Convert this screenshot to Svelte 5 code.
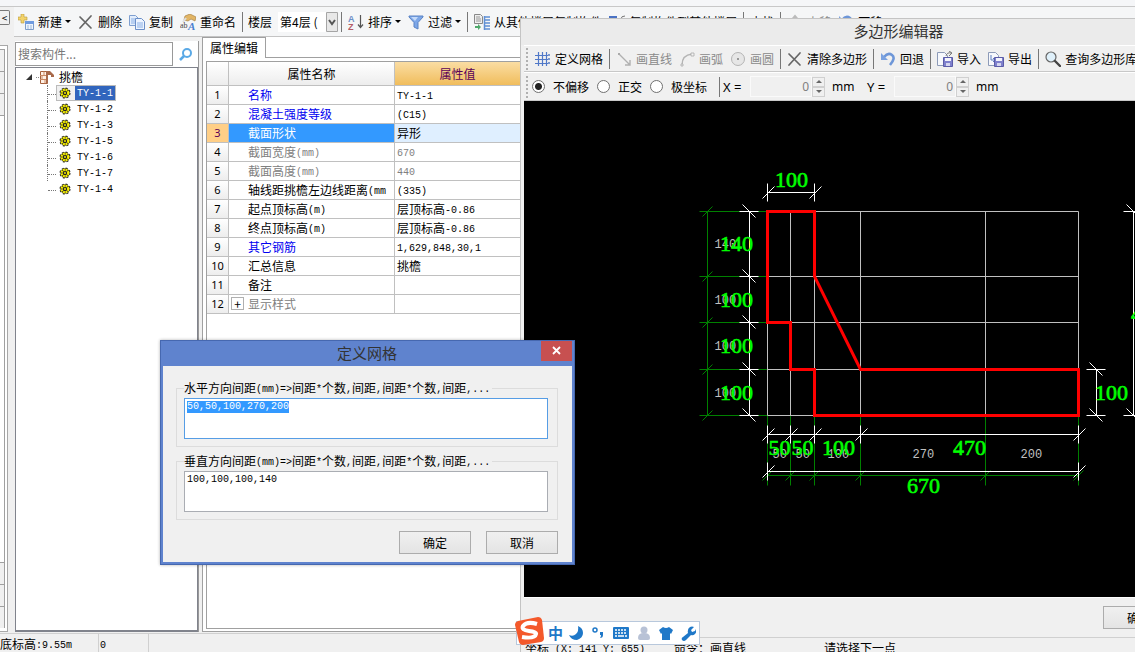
<script lang="ts">
  import { onMount } from "svelte";

  type Tool = { icon?: string; label?: string; caret?: boolean; disabled?: boolean; sep?: boolean };
  type Row = { name: string; value: string; tone?: string; expand?: boolean };

  const SEP: Tool = { sep: true };

  const fileTools: Tool[] = [
    { icon: "new", label: "新建", caret: true },
    { icon: "cross", label: "删除" },
    { icon: "copy", label: "复制" },
    { icon: "rename", label: "重命名" },
    SEP,
  ];

  const listTools: Tool[] = [
    SEP,
    { icon: "sort", label: "排序", caret: true },
    { icon: "filter", label: "过滤", caret: true },
    SEP,
    { icon: "from", label: "从其他楼层复制构件" },
    { icon: "to", label: "复制构件到其他楼层" },
    SEP,
    { label: "查找" },
    SEP,
    { icon: "up", label: "上移", disabled: true },
    { icon: "undo", label: "下移" },
  ];

  const editorTools: Tool[] = [
    { icon: "grid", label: "定义网格" },
    SEP,
    { icon: "line", label: "画直线", disabled: true },
    { icon: "arc", label: "画弧", disabled: true },
    { icon: "circle", label: "画圆", disabled: true },
    SEP,
    { icon: "cross", label: "清除多边形" },
    SEP,
    { icon: "undo", label: "回退" },
    SEP,
    { icon: "import", label: "导入" },
    { icon: "export", label: "导出" },
    SEP,
    { icon: "magnify", label: "查询多边形库" },
  ];

  const members = ["TY-1-1", "TY-1-2", "TY-1-3", "TY-1-5", "TY-1-6", "TY-1-7", "TY-1-4"];
  let selected = $state("TY-1-1");

  const rows: Row[] = [
    { name: "名称", value: "TY-1-1", tone: "key" },
    { name: "混凝土强度等级", value: "(C15)", tone: "key" },
    { name: "截面形状", value: "异形", tone: "active" },
    { name: "截面宽度(mm)", value: "670", tone: "muted" },
    { name: "截面高度(mm)", value: "440", tone: "muted" },
    { name: "轴线距挑檐左边线距离(mm", value: "(335)" },
    { name: "起点顶标高(m)", value: "层顶标高-0.86" },
    { name: "终点顶标高(m)", value: "层顶标高-0.86" },
    { name: "其它钢筋", value: "1,629,848,30,1", tone: "key" },
    { name: "汇总信息", value: "挑檐" },
    { name: "备注", value: "" },
    { name: "显示样式", value: "", tone: "muted", expand: true },
  ];

  const offsets = ["不偏移", "正交", "极坐标"];
  let offset = $state("不偏移");

  // Section grid, in canvas units
  const xs = [243, 266, 290, 336, 461, 554];
  const ys = [110, 175, 221, 268, 314];
  const outline = "243,110 290,110 290,175 336,268 554,268 554,314 290,314 290,268 266,268 266,221 243,221";

  const gridLabels = [
    { x: 190, y: 146, text: "140" },
    { x: 190, y: 202, text: "100" },
    { x: 190, y: 248, text: "100" },
    { x: 190, y: 295, text: "100" },
    { x: 248, y: 356, text: "50" },
    { x: 271, y: 356, text: "50" },
    { x: 303, y: 356, text: "100" },
    { x: 388, y: 356, text: "270" },
    { x: 496, y: 356, text: "200" },
  ];
  const sizeLabels = [
    { x: 267, y: 85, text: "100" },
    { x: 212, y: 149, text: "140" },
    { x: 212, y: 205, text: "100" },
    { x: 212, y: 251, text: "100" },
    { x: 212, y: 298, text: "100" },
    { x: 255, y: 353, text: "50" },
    { x: 278, y: 353, text: "50" },
    { x: 314, y: 353, text: "100" },
    { x: 445, y: 353, text: "470" },
    { x: 399, y: 391, text: "670" },
    { x: 587, y: 298, text: "100" },
    { x: 623, y: 219, text: "440" },
  ];

  let horizontal = $state("50,50,100,270,200");
  let vertical = $state("100,100,100,140");
  let firstField: HTMLTextAreaElement;

  onMount(() => {
    firstField.focus();
    firstField.select();
  });
</script>

<!-- Full-width runs keep the 12px size, half-width runs take exactly half of it per glyph -->
{#snippet song(text: string)}
  {#each text.split(/([ -~]+)/).filter(Boolean) as run}{#if /[ -~]/.test(run)}<span class="half">{run}</span>{:else}{run}{/if}{/each}
{/snippet}

{#snippet icon(kind: string | undefined)}
  <svg class="icon" width="16" height="16" viewBox="0 0 16 16" fill="none" aria-hidden="true">
    {#if kind === "new"}
      <path d="M3 0h3v3h3v3H6v3H3V6H0V3h3z" fill="#f3d36b" stroke="#b99a3c" stroke-width=".6" />
      <path d="M7.500 7.500h8v8h-8z" fill="#eef4fc" stroke="#7d9cc9" />
      <path d="M7 7h9v3H7z" fill="#6f9be0" />
      <path d="M9 12h2m1 0h2m-5 2h2m1 0h2" stroke="#9db8dc" />
    {:else if kind === "cross"}
      <path d="M2 3l11 11M13 2L2 14" stroke="#666" stroke-width="1.700" stroke-linecap="round" />
    {:else if kind === "copy"}
      <path d="M.5 1.500h6l3 3v7h-9z" fill="#e4eefc" stroke="#7f9fd0" />
      <path d="M6.500 4.500h6l3 3v8h-9z" fill="#edf4ff" stroke="#6b8fc8" />
      <path d="M8 9h6m-6 2h6m-6 2h6M2 5h4M2 7h4M2 9h4" stroke="#8bb0e6" />
    {:else if kind === "rename"}
      <path d="M5 2l5-2 6 3-1 4-4-2-3 2-4-1z" fill="#e2b565" stroke="#a98345" stroke-width=".7" />
      <path d="M3 8l3-4" stroke="#ddd" stroke-width="2" />
      <text x="0" y="14" class="glyph-a">ab</text>
      <text x="8" y="16" class="glyph-b">A</text>
    {:else if kind === "sort"}
      <text x="0" y="8" class="glyph-s" fill="#6c8fc7">A</text>
      <text x="0" y="16" class="glyph-s" fill="#b35c66">Z</text>
      <path d="M12.500 1v12M10 10.500l2.500 3 2.500-3" stroke="#555" stroke-width="1.200" />
    {:else if kind === "filter"}
      <path d="M1 2h14v1l-5 5.500V15l-4-2V8.500L1 3z" fill="#7da7e8" stroke="#5b83c4" />
      <path d="M3 3h7L7 7z" fill="#c4dafa" />
    {:else if kind === "from"}
      <path d="M.5.5h6l2 2v7h-8z" fill="#eee" stroke="#888" />
      <path d="M2 3h4M2 5h5M2 7h5" stroke="#999" />
      <path d="M1 12h3v-2l3 3-3 3v-2H1z" fill="#4fa96b" />
      <path d="M10.500 2v14M10 3h6m-6 3h6m-6 3h6m-6 3h6m-6 3h6" stroke="#5f8fd4" stroke-width="1.500" />
    {:else if kind === "to"}
      <path d="M0 2h8v13H0z" fill="#4a72c4" />
      <path d="M2 4h4v9H2z" fill="#cfdffa" />
      <path d="M12 15V5q0-3 4-3" stroke="#777" />
    {:else if kind === "up"}
      <path d="M8 2v12M3 8l5-6 5 6" stroke="#bbb" stroke-width="2" />
    {:else if kind === "grid"}
      <path d="M3.500 1v14M7.500 1v14M11.500 1v14M0 4.500h14M0 8.500h14M0 12.500h14" stroke="#5078c8" stroke-width="1.200" />
      <path d="M13 3h2v2h-2zM13 7h2v2h-2zM13 11h2v2h-2z" fill="#7b98d0" />
    {:else if kind === "line"}
      <path d="M3 3l11 11M14 9v5H9" stroke="#b0b0b0" stroke-width="1.400" />
      <path d="M2 2h2v2H2z" fill="#aaa" />
    {:else if kind === "arc"}
      <path d="M3 14Q3 4 13 3" stroke="#b4b4b4" stroke-width="1.300" />
      <path d="M2 13h2v2H2zM12 2h3v3h-3z" fill="#f4f4f4" stroke="#aaa" stroke-width=".8" />
    {:else if kind === "circle"}
      <circle cx="8" cy="8" r="6.500" fill="#e6e6e6" stroke="#b4b4b4" />
      <path d="M7 7h2v2H7z" fill="#999" />
    {:else if kind === "undo"}
      <path d="M4 6q4-5 8-2t-2 10" stroke="#6d96d8" stroke-width="2.600" />
      <path d="M1 2v7h7z" fill="#7ba2e0" />
    {:else if kind === "import" || kind === "export"}
      <path d="M.5 1.500h7l3 3v10h-10z" fill="#f6f8fc" stroke="#8d9bb8" />
      {#if kind === "import"}
        <path d="M9 5q1-4 5-3M12 0l3 2-3 3" stroke="#777" />
      {:else}
        <path d="M3 4v5h4M5 7l2 2-2 2" stroke="#5f7fc0" />
      {/if}
      <path d="M6.500 6.500h9v9h-9z" fill="#7e80cc" stroke="#5b5ca8" />
      <path d="M8 7h6v3H8z" fill="#f3f3fb" />
      <path d="M9 12h4v3H9z" fill="#d4d5ef" />
    {:else if kind === "magnify"}
      <circle cx="6" cy="6" r="5" fill="#dff0fa" stroke="#666" stroke-width="1.200" />
      <path d="M10 10l5 5" stroke="#444" stroke-width="2.400" stroke-linecap="round" />
    {/if}
  </svg>
{/snippet}

{#snippet tools(items: Tool[])}
  {#each items as tool}
    {#if tool.sep}
      <span class="sep"></span>
    {:else}
      <button class="tool" disabled={tool.disabled}>
        {#if tool.icon}{@render icon(tool.icon)}{/if}
        <span>{tool.label}</span>
        {#if tool.caret}<i class="caret"></i>{/if}
      </button>
    {/if}
  {/each}
{/snippet}

<!-- Slanted end mark of a dimension line -->
{#snippet mark(x: number, y: number, across: boolean)}
  {#if across}
    <path d="M{x - 10} {y}h19M{x - 7} {y - 7}l13 13" />
  {:else}
    <path d="M{x} {y - 9}v18M{x - 5} {y + 6}l12 -12" />
  {/if}
{/snippet}

<div class="desktop">
  <main class="app">
    <div class="ribbon"></div>
    <div class="top">
      <button class="collapse" aria-label="收起">&lt;</button>
      <div class="toolbar main-bar">
        {@render tools(fileTools)}
        <label class="floor-label" for="floor">楼层</label>
        <div class="combo">
          <select id="floor">
            <option>第4层 (</option>
          </select>
          <svg width="12" height="20" viewBox="0 0 12 20" aria-hidden="true">
            <path d="M.5.5h11v19H.5z" fill="#e8e8e8" stroke="#a5a5a5" />
            <path d="M3 8l3 4 3-4" fill="none" stroke="#555" stroke-width="2" />
          </svg>
        </div>
        {@render tools(listTools)}
      </div>
    </div>

    <div class="work">
      <div class="rail">
        <span></span><span></span><span></span><span class="tall"></span><span></span><span></span><span></span>
      </div>

      <section class="tree-pane">
        <div class="search">
          <input type="text" placeholder="搜索构件..." aria-label="搜索构件" />
          <button aria-label="搜索">
            <svg width="14" height="14" viewBox="0 0 14 14" fill="none">
              <circle cx="8" cy="6" r="4" stroke="#5aa9e6" stroke-width="2" />
              <path d="M5 9l-4 4" stroke="#5aa9e6" stroke-width="2.500" />
            </svg>
          </button>
        </div>
        <div class="tree">
          <div class="root">
            <svg width="28" height="14" viewBox="0 0 28 14" aria-hidden="true">
              <path d="M6 4v6H0z" fill="#333" />
              <path d="M10 7.500h4" stroke="#888" stroke-dasharray="1 1" />
              <path d="M14.500 1.500h7v12h-7z" fill="#fff0e4" stroke="#a5603c" />
              <path d="M14 5.500h8m-8 4h8m-4-8v4m-2 0v4m3 0v4" stroke="#c98963" />
              <path d="M20 1h4l4 4v2h-3V5h-3v8h-2z" fill="#a8694a" />
            </svg>
            <span>挑檐</span>
          </div>
          <ul>
            {#each members as name}
              <li>
                <button class="node" class:on={name === selected} onclick={() => (selected = name)}>
                  <svg width="12" height="12" viewBox="0 0 12 12" aria-hidden="true">
                    <circle cx="6" cy="6" r="4.700" fill="#222" stroke="#222" stroke-width="1.600" stroke-dasharray="2 1.700" />
                    <circle cx="6" cy="6" r="3.300" fill="none" stroke="#f5ee00" stroke-width="2.400" stroke-dasharray="2 .6" />
                    <circle cx="6" cy="6" r="1" fill="#f5ee00" />
                  </svg>
                  <span>{@render song(name)}</span>
                </button>
              </li>
            {/each}
          </ul>
        </div>
      </section>

      <section class="props">
        <div class="tabs"><button class="tab">属性编辑</button></div>
        <div class="sheet">
          <table>
            <colgroup><col class="c-no" /><col class="c-name" /><col class="c-value" /></colgroup>
            <thead>
              <tr><th></th><th>属性名称</th><th class="hot">属性值</th></tr>
            </thead>
            <tbody>
              {#each rows as row, i}
                <tr class={row.tone}>
                  <th scope="row">{i + 1}</th>
                  <td class="name">
                    {#if row.expand}<button class="plus" aria-label="展开">+</button>{/if}{@render song(row.name)}
                  </td>
                  <td class="value">{@render song(row.value)}</td>
                </tr>
              {/each}
            </tbody>
          </table>
        </div>
      </section>
    </div>

    <footer class="status">
      <span>{@render song("底标高:9.55m")}</span>
      <span>{@render song("0")}</span>
    </footer>
  </main>

  <section class="editor">
    <h2>多边形编辑器</h2>
    <div class="toolbar edit-bar">
      <span class="grip"></span>
      {@render tools(editorTools)}
    </div>
    <div class="options">
      <span class="grip"></span>
      {#each offsets as name}
        <label class="radio"><input type="radio" name="offset" value={name} bind:group={offset} />{name}</label>
      {/each}
      <span class="sep"></span>
      {#each ["X", "Y"] as axis}
        <label class="axis" for="axis-{axis}">{axis} =</label>
        <input class="number" id="axis-{axis}" type="text" value="0" disabled />
        <span class="spin">
          <button aria-label="{axis} 增加"><i class="up"></i></button>
          <button aria-label="{axis} 减少"><i class="down"></i></button>
        </span>
        <span class="unit">mm</span>
      {/each}
    </div>

    <svg class="canvas" width="100%" role="img" aria-label="挑檐截面">
      <g transform="translate(0.5 0.5)" fill="none">
        <g stroke="#008000">
          <path d="M183 110V314M243 374H554" />
          {#each ys as y}<path d="M175 {y}H243M178 {y + 5}l10 -10" />{/each}
          {#each xs as x}<path d="M{x} 314V384M{x - 5} 379l10 -10" />{/each}
        </g>
        <g stroke="#c0c0c0">
          {#each xs as x}<path d="M{x} 110V314" />{/each}
          {#each ys as y}<path d="M243 {y}H554" />{/each}
        </g>
        <g class="grid-text">
          {#each gridLabels as l}<text x={l.x} y={l.y}>{l.text}</text>{/each}
        </g>
        <g stroke="#fff">
          <path d="M243 91H290M225 110V314M243 333H554M243 370H554M572 268V314M609 110V314" />
          {@render mark(243, 91, false)}
          {@render mark(290, 91, false)}
          {#each ys as y}{@render mark(225, y, true)}{/each}
          {#each xs.filter((x) => x !== 461) as x}{@render mark(x, 333, false)}{/each}
          {@render mark(243, 370, false)}
          {@render mark(554, 370, false)}
          {@render mark(572, 268, true)}
          {@render mark(572, 314, true)}
          {@render mark(609, 110, true)}
          {@render mark(609, 314, true)}
        </g>
        <polygon points={outline} stroke="#f00" stroke-width="3" />
        <g class="size-text">
          {#each sizeLabels as l}<text x={l.x} y={l.y}>{l.text}</text>{/each}
        </g>
      </g>
    </svg>

    <div class="editor-foot">
      <button class="push">确定</button>
      <button class="push">取消</button>
    </div>
    <div class="editor-status">
      <span>{@render song("坐标 (X: 141 Y: 655)")}</span>
      <span>命令：画直线</span>
      <span>请选择下一点</span>
    </div>
  </section>

  <div class="dialog" role="dialog" aria-labelledby="dialog-title">
    <header>
      <h2 id="dialog-title">定义网格</h2>
      <button class="close" aria-label="关闭">
        <svg width="10" height="10" viewBox="0 0 10 10"><path d="M1 1l7 7M8 1L1 8" stroke="#fff" stroke-width="1.800" /></svg>
      </button>
    </header>
    <div class="dialog-body">
      <div class="group">
        <label for="horizontal">{@render song("水平方向间距(mm)=>间距*个数,间距,间距*个数,间距,...")}</label>
        <textarea id="horizontal" spellcheck="false" bind:this={firstField} bind:value={horizontal}></textarea>
      </div>
      <div class="group">
        <label for="vertical">{@render song("垂直方向间距(mm)=>间距*个数,间距,间距*个数,间距,...")}</label>
        <textarea id="vertical" spellcheck="false" bind:value={vertical}></textarea>
      </div>
      <div class="actions">
        <button class="push">确定</button>
        <button class="push">取消</button>
      </div>
    </div>
  </div>

  <div class="ime">
    <svg class="ime-logo" width="30" height="28" viewBox="0 0 30 28" aria-hidden="true">
      <path d="M3 4L23 0q3 0 4 3l2 18q0 3-3 4L8 28q-3 0-4-3L0 8q0-3 3-4z" fill="#f4592b" />
      <path d="M22 7Q12 4 8 9q-2 4 6 5t7 3q-1 5-14 3" fill="none" stroke="#fff" stroke-width="4" />
    </svg>
    <b>中</b>
    <svg width="14" height="14" viewBox="0 0 14 14"><path d="M9 0q5 2 5 7t-6 7q-6 0-8-5 4 2 7-1t2-8z" fill="#1f78c8" /></svg>
    <svg width="14" height="14" viewBox="0 0 14 14">
      <circle cx="4" cy="4" r="2" fill="none" stroke="#1f78c8" stroke-width="1.500" />
      <path d="M9 6h3v3q0 3-3 3 1-1 1-3H9z" fill="#1f78c8" />
    </svg>
    <svg width="16" height="12" viewBox="0 0 16 12">
      <rect width="16" height="12" rx="1" fill="#1f78c8" />
      <path d="M2 3h12M2 6h12" stroke="#fff" stroke-width="1.500" stroke-dasharray="2 1" />
      <path d="M2 9h2m1 0h6m1 0h2" stroke="#fff" stroke-width="1.500" />
    </svg>
    <svg width="14" height="14" viewBox="0 0 14 14">
      <circle cx="7" cy="4" r="3.500" fill="#b8c2d6" />
      <path d="M1 12q0-5 6-5t6 5q0 2-2 2H3q-2 0-2-2z" fill="#b8c2d6" />
    </svg>
    <svg width="14" height="13" viewBox="0 0 14 13"><path d="M4 0q3 2 6 0l4 3-2 4-1-1v7H3V6L2 7 0 3z" fill="#1f78c8" /></svg>
    <svg width="15" height="15" viewBox="0 0 15 15">
      <path d="M1 14q-1-2 1-3l5-4q-1-4 2-6 2-1 4 0l-3 3 1 2 3-1 1-2q1 3-1 5t-4 1l-5 5q-2 2-4 0z" fill="#1f78c8" />
    </svg>
  </div>
</div>

<style>
  :global(body) {
    margin: 0;
  }

  .desktop {
    position: relative;
    height: 100vh;
    overflow: hidden;
    background: #f0f0f0;
    color: #000;
    font: 12px/16px "Noto Sans CJK SC", sans-serif;
  }

  .desktop * {
    box-sizing: border-box;
  }

  button,
  input,
  select,
  textarea {
    margin: 0;
    padding: 0;
    border: 0;
    border-radius: 0;
    outline: 0;
    background: none;
    color: inherit;
    font: inherit;
  }

  svg {
    flex: none;
    display: block;
  }

  .half {
    font: 10px/12px "Liberation Mono", monospace;
    vertical-align: 1px;
    white-space: pre;
  }

  .app {
    height: 100%;
    display: flex;
    flex-direction: column;
  }

  .ribbon {
    height: 7px;
    background: #f5f6f8;
    border-bottom: 1px solid #c8c8c8;
  }

  .top {
    display: flex;
    height: 30px;
    overflow: hidden;
  }

  .collapse {
    width: 10px;
    height: 15px;
    margin: 3px 4px 0 0;
    border: 1px solid #777;
    border-left: 0;
    border-radius: 0 2px 2px 0;
    font-size: 10px;
    line-height: 12px;
  }

  /* ── Toolbars ── */
  .toolbar {
    display: flex;
    align-items: center;
    gap: 1px;
    white-space: nowrap;
  }

  .main-bar {
    flex: 1;
    min-width: 0;
    padding-left: 1px;
    background: #f5f6f7;
    border-bottom: 1px solid #c4c4c4;
  }

  .tool {
    flex: none;
    display: flex;
    align-items: center;
    gap: 4px;
    padding: 0 3px;
  }

  .tool:disabled {
    color: #8a8a8a;
  }

  .caret {
    margin-left: -1px;
    border: 3px solid transparent;
    border-top-color: #000;
    border-bottom: 0;
  }

  .sep {
    flex: none;
    width: 1px;
    height: 20px;
    margin: 0 2px;
    background: #777;
  }

  .glyph-a {
    font: 8px "Liberation Serif", serif;
    fill: #444;
  }

  .glyph-b {
    font: italic bold 11px "Liberation Serif", serif;
    fill: #4a7fd0;
  }

  .glyph-s {
    font: bold 9px "Liberation Sans", sans-serif;
  }

  .floor-label {
    padding: 0 5px 0 2px;
  }

  .combo {
    flex: none;
    display: flex;
    width: 60px;
    background: #fff;
  }

  .combo select {
    width: 48px;
    padding-left: 2px;
    appearance: none;
  }

  /* ── Work area ── */
  .work {
    flex: 1;
    min-height: 0;
    display: flex;
  }

  .rail {
    width: 8px;
    margin: 8px 7px 1px 0;
    padding: 3px 2px 3px 0;
    display: flex;
    flex-direction: column;
    background: #fff;
    border: 1px solid #a8a8a8;
    border-left: 0;
  }

  .rail span {
    height: 22px;
    background: #f0f0f0;
    border: 1px solid #a0a0a0;
    border-left: 0;
    border-bottom: 0;
  }

  .rail .tall {
    flex: 1;
    background: #fff;
  }

  .tree-pane {
    width: 184px;
    margin: 4px 3px 1px 0;
    display: flex;
    flex-direction: column;
    background: #fff;
    border-right: 1px solid #999;
  }

  .search {
    display: flex;
    height: 26px;
    padding: 1px 0;
  }

  .search input {
    width: 158px;
    padding: 0 2px;
    border: 1px solid #999;
    color: #777;
  }

  .search input::placeholder {
    color: #777;
  }

  .search button {
    flex: 1;
    display: grid;
    place-items: center;
  }

  .tree {
    flex: 1;
    padding: 1px 0 0 10px;
    border: 1px solid #80838c;
    border-width: 1px 1px 2px;
  }

  .root {
    display: flex;
    align-items: center;
    gap: 5px;
    height: 16px;
  }

  .tree ul {
    margin: 0 0 0 21px;
    padding: 0;
    list-style: none;
  }

  .tree li {
    display: flex;
    height: 16px;
    border-left: 1px dotted #777;
  }

  .tree li::before {
    content: "";
    width: 8px;
    height: 9px;
    border-bottom: 1px dotted #777;
  }

  .tree li:last-child {
    border-left-color: transparent;
  }

  .node {
    display: flex;
    align-items: center;
    gap: 4px;
    padding: 0 0 0 2px;
    border: 1px solid transparent;
  }

  .node span {
    height: 14px;
    line-height: 12px;
  }

  .node > span {
    padding: 0 2px;
  }

  .node.on {
    background: #f0f0f0;
    border-color: #bbb;
  }

  .node.on span {
    background: #3165bd;
    color: #fff;
  }

  /* ── Property sheet ── */
  .props {
    flex: 1;
    min-width: 0;
    display: flex;
    flex-direction: column;
    margin-bottom: 1px;
    background: #fff;
    border: 1px solid #a0a0a0;
    border-top: 0;
  }

  .tabs {
    display: flex;
    height: 21px;
  }

  .tabs::after {
    content: "";
    flex: 1;
    border-bottom: 1px solid #a0a0a0;
  }

  .tab {
    width: 63px;
    border: 1px solid #a0a0a0;
    border-width: 1px 1px 0 0;
  }

  .sheet {
    flex: 1;
    margin: 3px 0 2px 3px;
    border: 1px solid #a0a0a0;
  }

  table {
    width: 314px;
    table-layout: fixed;
    border-collapse: separate;
    border-spacing: 0;
  }

  .c-no {
    width: 22px;
  }

  .c-name {
    width: 166px;
  }

  th,
  td {
    height: 19px;
    padding: 0;
    border: 1px solid #c0c0c0;
    border-width: 0 1px 1px 0;
    line-height: 16px;
    text-align: left;
    white-space: nowrap;
    overflow: hidden;
  }

  th {
    background: linear-gradient(#fff, #ededed);
    font-weight: 400;
    text-align: center;
  }

  thead th {
    height: 24px;
  }

  tbody th {
    font: 11px/16px "Noto Sans", sans-serif;
  }

  thead .hot {
    background: linear-gradient(#fbdda3, #f0bd5c);
    color: #5a0058;
  }

  .name {
    position: relative;
    padding-left: 19px;
  }

  .value {
    padding-left: 2px;
  }

  .key .name {
    color: #0000f0;
  }

  .muted td {
    color: #808080;
  }

  .active th {
    background: #ffcf87;
    color: #5a0058;
  }

  .active .name {
    background: #3399ff;
    color: #fff;
  }

  .active .value {
    background: #dfefff;
  }

  .plus {
    position: absolute;
    left: 2px;
    top: 2px;
    width: 13px;
    height: 13px;
    border: 1px solid #b0b0b0;
    color: #000;
    line-height: 10px;
  }

  .status {
    display: flex;
    height: 19px;
    border-top: 1px solid #d0d0d0;
    line-height: 20px;
  }

  .status span {
    white-space: nowrap;
  }

  .status > span {
    width: 50px;
    padding-left: 1px;
    border-right: 1px solid #d0d0d0;
  }

  .status > span:first-child {
    width: 99px;
    padding-left: 0;
  }

  /* ── Polygon editor window ── */
  .editor {
    position: absolute;
    left: 520px;
    right: -142px;
    top: 18px;
    bottom: -8px;
    display: flex;
    flex-direction: column;
    padding-left: 3px;
    background: #f0f0f0;
    border: 1px solid #c4c4c4;
    border-bottom: 0;
  }

  h2 {
    margin: 0;
    color: #333;
    font-size: 15px;
    font-weight: 400;
    line-height: 26px;
    text-align: center;
  }

  .editor h2 {
    height: 26px;
    margin-left: -3px;
    background: #ebebeb;
    line-height: 24px;
  }

  .edit-bar,
  .options {
    height: 27px;
    padding-left: 2px;
    border-top: 1px solid #fff;
    border-bottom: 1px solid #c8c8c8;
  }

  .grip {
    flex: none;
    width: 2px;
    height: 22px;
    margin-right: 3px;
    background: repeating-linear-gradient(#b0b0b0 0 2px, transparent 2px 4px);
  }

  .options {
    display: flex;
    align-items: center;
    height: 29px;
  }

  .options .grip {
    margin-right: 4px;
  }

  .options .sep {
    margin: 0 3px 0 4px;
  }

  .radio {
    display: flex;
    align-items: center;
    gap: 8px;
    margin-right: 8px;
  }

  .radio input {
    width: 13px;
    height: 13px;
    background: #fff;
    border: 1px solid #707070;
    border-radius: 50%;
    appearance: none;
  }

  .radio input:checked {
    background: radial-gradient(#222 0 3px, #fff 4px);
  }

  .axis {
    width: 27px;
    font: 13px/16px "Noto Sans", sans-serif;
  }

  .number {
    width: 62px;
    height: 21px;
    padding-right: 2px;
    border: 1px solid #fafafa;
    color: #808080;
    font: 12px/16px "Noto Sans", sans-serif;
    text-align: right;
  }

  .spin {
    display: flex;
    flex-direction: column;
    width: 13px;
  }

  .spin button {
    display: grid;
    place-items: center;
    height: 10px;
    border: 1px solid #d0d0d0;
  }

  .spin i {
    border: 3px solid transparent;
  }

  .spin .up {
    border-top: 0;
    border-bottom-color: #666;
  }

  .spin .down {
    border-bottom: 0;
    border-top-color: #666;
  }

  .unit {
    width: 42px;
    padding-left: 7px;
    font: 12px/16px "Noto Sans", sans-serif;
  }

  .canvas {
    flex: 1;
    min-height: 0;
    background: #000;
  }

  .grid-text {
    fill: #c0c0c0;
    font: 12px "Liberation Mono", monospace;
  }

  .size-text {
    fill: #00ff00;
    stroke: #00ff00;
    stroke-width: 0.6;
    font: 22px "Liberation Serif", serif;
    text-anchor: middle;
  }

  .editor-foot {
    display: flex;
    justify-content: flex-end;
    gap: 15px;
    height: 41px;
    padding: 8px 14px 0 0;
    border-top: 1px solid #fff;
    border-bottom: 1px solid #d0d0d0;
  }

  .push {
    width: 72px;
    height: 23px;
    background: linear-gradient(#f0f0f0, #e4e4e4);
    border: 1px solid #acacac;
    line-height: 20px;
  }

  .editor-status {
    display: grid;
    grid-template-columns: 149px 150px auto;
    height: 22px;
    padding: 2px 1px;
  }

  /* ── Grid dialog ── */
  .dialog {
    position: absolute;
    left: 160px;
    top: 340px;
    width: 415px;
    background: #5f83ce;
    border: 1px solid #4668b0;
    padding: 0 2px 2px;
    box-shadow: 0 0 3px rgba(0, 0, 0, 0.3);
  }

  .dialog header {
    display: flex;
    align-items: flex-start;
    height: 25px;
  }

  .dialog h2 {
    flex: 1;
    padding-left: 30px;
    line-height: 24px;
  }

  .close {
    display: grid;
    place-items: center;
    width: 31px;
    height: 20px;
    background: #c75050;
  }

  .dialog-body {
    display: flex;
    flex-direction: column;
    gap: 14px;
    padding: 22px 14px 8px 13px;
    background: #f0f0f0;
  }

  .group {
    display: flex;
    flex-direction: column;
    padding: 0 9px 7px 7px;
    border: 1px solid #dcdcdc;
  }

  .group label {
    align-self: flex-start;
    height: 16px;
    margin: -8px 0 1px;
    padding-right: 2px;
    background: #f0f0f0;
    line-height: 14px;
    white-space: nowrap;
  }

  .group textarea {
    height: 41px;
    padding: 2px;
    background: #fff;
    border: 1px solid #aaadb3;
    font: 10px/12px "Liberation Mono", monospace;
    resize: none;
  }

  .group textarea:focus {
    border-color: #569de5;
  }

  .group textarea::selection {
    background: #3399ff;
    color: #fff;
  }

  .actions {
    display: flex;
    justify-content: flex-end;
    gap: 15px;
    margin-top: -3px;
  }

  /* ── Input method bar ── */
  .ime {
    position: absolute;
    left: 516px;
    top: 621px;
    display: flex;
    align-items: center;
    gap: 8px;
    height: 24px;
    padding-right: 3px;
    background: #fff;
    border: 1px solid #b8c8dc;
  }

  .ime-logo {
    margin: -4px -5px 0 -2px;
  }

  .ime b {
    margin-right: -2px;
    color: #1f78c8;
    font-size: 15px;
    line-height: 20px;
  }
</style>
